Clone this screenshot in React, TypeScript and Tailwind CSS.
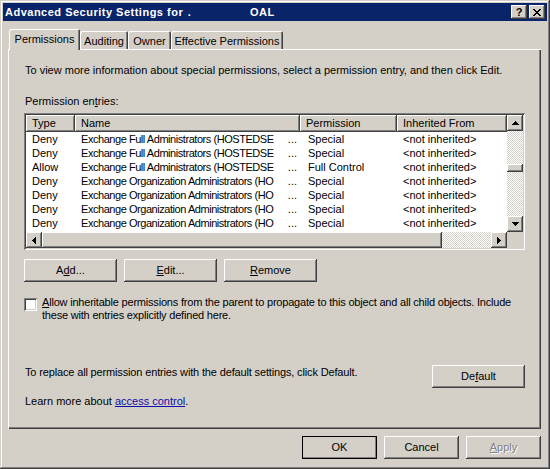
import type { ReactNode } from 'react';

const raised =
  'shadow-[inset_-1px_-1px_0_#404040,inset_1px_1px_0_#ffffff,inset_-2px_-2px_0_#808080,inset_2px_2px_0_#d4d0c8]';
const sunken =
  'shadow-[inset_1px_1px_0_#808080,inset_-1px_-1px_0_#ffffff,inset_2px_2px_0_#404040,inset_-2px_-2px_0_#d4d0c8]';
const checker =
  'bg-[conic-gradient(#ffffff_25%,#d4d0c8_0_50%,#ffffff_0_75%,#d4d0c8_0)] bg-[length:2px_2px]';

const fullAdmins = 'Exchange Full Administrators (HOSTEDSE';
const orgAdmins = 'Exchange Organization Administrators (HO';

const rows = [
  ['Deny', fullAdmins, 'Special'],
  ['Deny', fullAdmins, 'Special'],
  ['Allow', fullAdmins, 'Full Control'],
  ['Deny', orgAdmins, 'Special'],
  ['Deny', orgAdmins, 'Special'],
  ['Deny', orgAdmins, 'Special'],
  ['Deny', orgAdmins, 'Special'],
  ['Allow', orgAdmins, 'Full Control'],
];

const columns = [
  { label: 'Type', width: 'w-[49px]' },
  { label: 'Name', width: 'w-[225px]' },
  { label: 'Permission', width: 'w-[97px]' },
  { label: 'Inherited From', width: 'w-[110px]' },
];

function Arrow({ dir }: { dir: 'up' | 'down' | 'left' | 'right' }) {
  const vertical = dir === 'up' || dir === 'down';
  const points = {
    up: '3.5,0 7,4 0,4',
    down: '0,0 7,0 3.5,4',
    left: '4,0 4,7 0,3.5',
    right: '0,0 4,3.5 0,7',
  }[dir];
  return (
    <svg width={vertical ? 7 : 4} height={vertical ? 4 : 7} viewBox={vertical ? '0 0 7 4' : '0 0 4 7'}>
      <polygon points={points} fill="#000" shapeRendering="crispEdges" />
    </svg>
  );
}

function ScrollButton({ dir }: { dir: 'up' | 'down' | 'left' | 'right' }) {
  return (
    <div className={`w-[16px] h-[16px] shrink-0 bg-[#d4d0c8] flex items-center justify-center ${raised}`}>
      <Arrow dir={dir} />
    </div>
  );
}

function Button({ children, width = 'w-[93px]', isDefault = false }: { children: ReactNode; width?: string; isDefault?: boolean }) {
  return (
    <div
      className={`${width} h-[23px] shrink-0 flex items-center justify-center bg-[#d4d0c8] ${raised} ${
        isDefault ? 'outline outline-1 -outline-offset-1 outline-black' : ''
      }`}
    >
      {children}
    </div>
  );
}

function TitleBar() {
  return (
    <div className="h-[18px] bg-[#0a246a] flex items-center pl-[2px] pr-[2px] text-white font-bold">
      <span className="w-[245px] whitespace-nowrap tracking-[0.5px]">
        Advanced Security Settings for <span className="ml-[1px]">.</span>
      </span>
      <span className="tracking-[0.5px]">OAL</span>
      <div className="ml-auto flex gap-[2px]">
        <div className={`w-[16px] h-[14px] bg-[#d4d0c8] flex items-center justify-center text-black text-[11px] font-bold ${raised}`}>
          ?
        </div>
        <div className={`w-[16px] h-[14px] bg-[#d4d0c8] flex items-center justify-center ${raised}`}>
          <svg width="8" height="7" viewBox="0 0 8 7">
            <path
              d="M0 0h2v1H0zM6 0h2v1H6zM1 1h2v1H1zM5 1h2v1H5zM2 2h4v1H2zM3 3h2v1H3zM2 4h4v1H2zM1 5h2v1H1zM5 5h2v1H5zM0 6h2v1H0zM6 6h2v1H6z"
              fill="#000"
            />
          </svg>
        </div>
      </div>
    </div>
  );
}

function Tabs() {
  const tabClass =
    'h-[18px] flex items-center justify-center pt-[2px] rounded-t-[2px] bg-[#d4d0c8] shadow-[inset_1px_1px_0_#ffffff,inset_-1px_0_0_#404040,inset_-2px_0_0_#808080]';
  return (
    <div className="h-[20px] flex items-end pl-[1px]">
      <div className="relative z-10 w-[71px] h-[21px] -mb-[1px] flex items-center justify-center pb-[1px] rounded-t-[2px] bg-[#d4d0c8] shadow-[inset_1px_1px_0_#ffffff,inset_-1px_0_0_#404040,inset_-2px_0_0_#808080]">
        Permissions
      </div>
      <div className={`w-[48px] ${tabClass}`}>Auditing</div>
      <div className={`w-[43px] ${tabClass}`}>Owner</div>
      <div className={`w-[112px] ${tabClass}`}>Effective Permissions</div>
    </div>
  );
}

function PermissionList() {
  return (
    <div className={`h-[137px] p-[2px] bg-[#d4d0c8] ${sunken}`}>
      <div className="grid grid-cols-[481px_16px] grid-rows-[117px_16px] h-full">
        <div className="bg-white overflow-hidden flex flex-col">
          <div className="h-[17px] shrink-0 flex">
            {columns.map((c) => (
              <div key={c.label} className={`${c.width} h-full shrink-0 flex items-center pl-[6px] bg-[#d4d0c8] ${raised}`}>
                {c.label}
              </div>
            ))}
          </div>
          {rows.map((r, i) => (
            <div key={i} className="h-[14px] shrink-0 flex items-center whitespace-nowrap">
              <div className="w-[49px] shrink-0 pl-[6px]">{r[0]}</div>
              <div className="w-[225px] shrink-0 pl-[6px] pr-[3px] flex">
                <span className="flex-1 min-w-0 overflow-hidden tracking-[-0.45px]">{r[1]}</span>
                <span className="shrink-0 pl-[2px]">...</span>
              </div>
              <div className="w-[97px] shrink-0 pl-[8px]">{r[2]}</div>
              <div className="w-[110px] shrink-0 pl-[6px]">&lt;not inherited&gt;</div>
            </div>
          ))}
        </div>
        <div className="flex flex-col">
          <ScrollButton dir="up" />
          <div className={`flex-1 ${checker}`}>
            <div className={`h-[8px] mt-[33px] bg-[#d4d0c8] ${raised}`} />
          </div>
          <ScrollButton dir="down" />
        </div>
        <div className="flex">
          <ScrollButton dir="left" />
          <div className={`w-[400px] h-full bg-[#d4d0c8] ${raised}`} />
          <div className={`flex-1 ${checker}`} />
          <ScrollButton dir="right" />
        </div>
        <div className="bg-[#d4d0c8]" />
      </div>
    </div>
  );
}

function Panel() {
  return (
    <div className="h-[380px] px-[16px] pt-[15px] flex flex-col bg-[#d4d0c8] shadow-[inset_1px_1px_0_#ffffff,inset_-1px_-1px_0_#404040,inset_-2px_-2px_0_#808080]">
      <p className="pl-[1px] whitespace-nowrap">
        To view more information about special permissions, select a permission entry, and then click Edit.
      </p>
      <p className="pl-[1px] mt-[18px]">
        Permission en<u>t</u>ries:
      </p>
      <div className="mt-[5px]">
        <PermissionList />
      </div>
      <div className="mt-[9px] flex gap-[7px]">
        <Button>
          A<u>d</u>d...
        </Button>
        <Button>
          <u>E</u>dit...
        </Button>
        <Button>
          <u>R</u>emove
        </Button>
      </div>
      <div className="mt-[14px] flex gap-[4px]">
        <div className={`w-[13px] h-[13px] mt-[2px] shrink-0 bg-white ${sunken}`} />
        <p className="whitespace-nowrap pl-[1px] tracking-[-0.2px]">
          <u>A</u>llow inheritable permissions from the parent to propagate to this object and all child objects. Include
          <br />
          these with entries explicitly defined here.
        </p>
      </div>
      <div className="mt-[43px] flex justify-between items-start">
        <p className="pl-[1px] pt-[1px] tracking-[-0.15px]">
          To replace all permission entries with the default settings, click Default.
        </p>
        <Button>
          De<u>f</u>ault
        </Button>
      </div>
      <p className="pl-[1px] mt-[7px]">
        Learn more about <span className="text-[#0c0ca8] underline">access control</span>.
      </p>
    </div>
  );
}

export default function App() {
  return (
    <div className="w-[550px] h-[469px] p-[3px] flex flex-col bg-[#d4d0c8] font-['Liberation_Sans',Arial,sans-serif] text-[11px] leading-[13px] text-black select-none shadow-[inset_-1px_-1px_0_#404040,inset_1px_1px_0_#d4d0c8,inset_-2px_-2px_0_#808080,inset_2px_2px_0_#ffffff]">
      <TitleBar />
      <div className="flex flex-col pl-[5px] pr-[6px] pt-[8px]">
        <Tabs />
        <Panel />
        <div className="mt-[7px] flex justify-end gap-[7px]">
          <Button width="w-[75px]" isDefault>
            OK
          </Button>
          <Button width="w-[75px]">Cancel</Button>
          <Button width="w-[75px]">
            <span className="text-[#808080] [text-shadow:1px_1px_0_#ffffff]">
              <u>A</u>pply
            </span>
          </Button>
        </div>
      </div>
    </div>
  );
}
